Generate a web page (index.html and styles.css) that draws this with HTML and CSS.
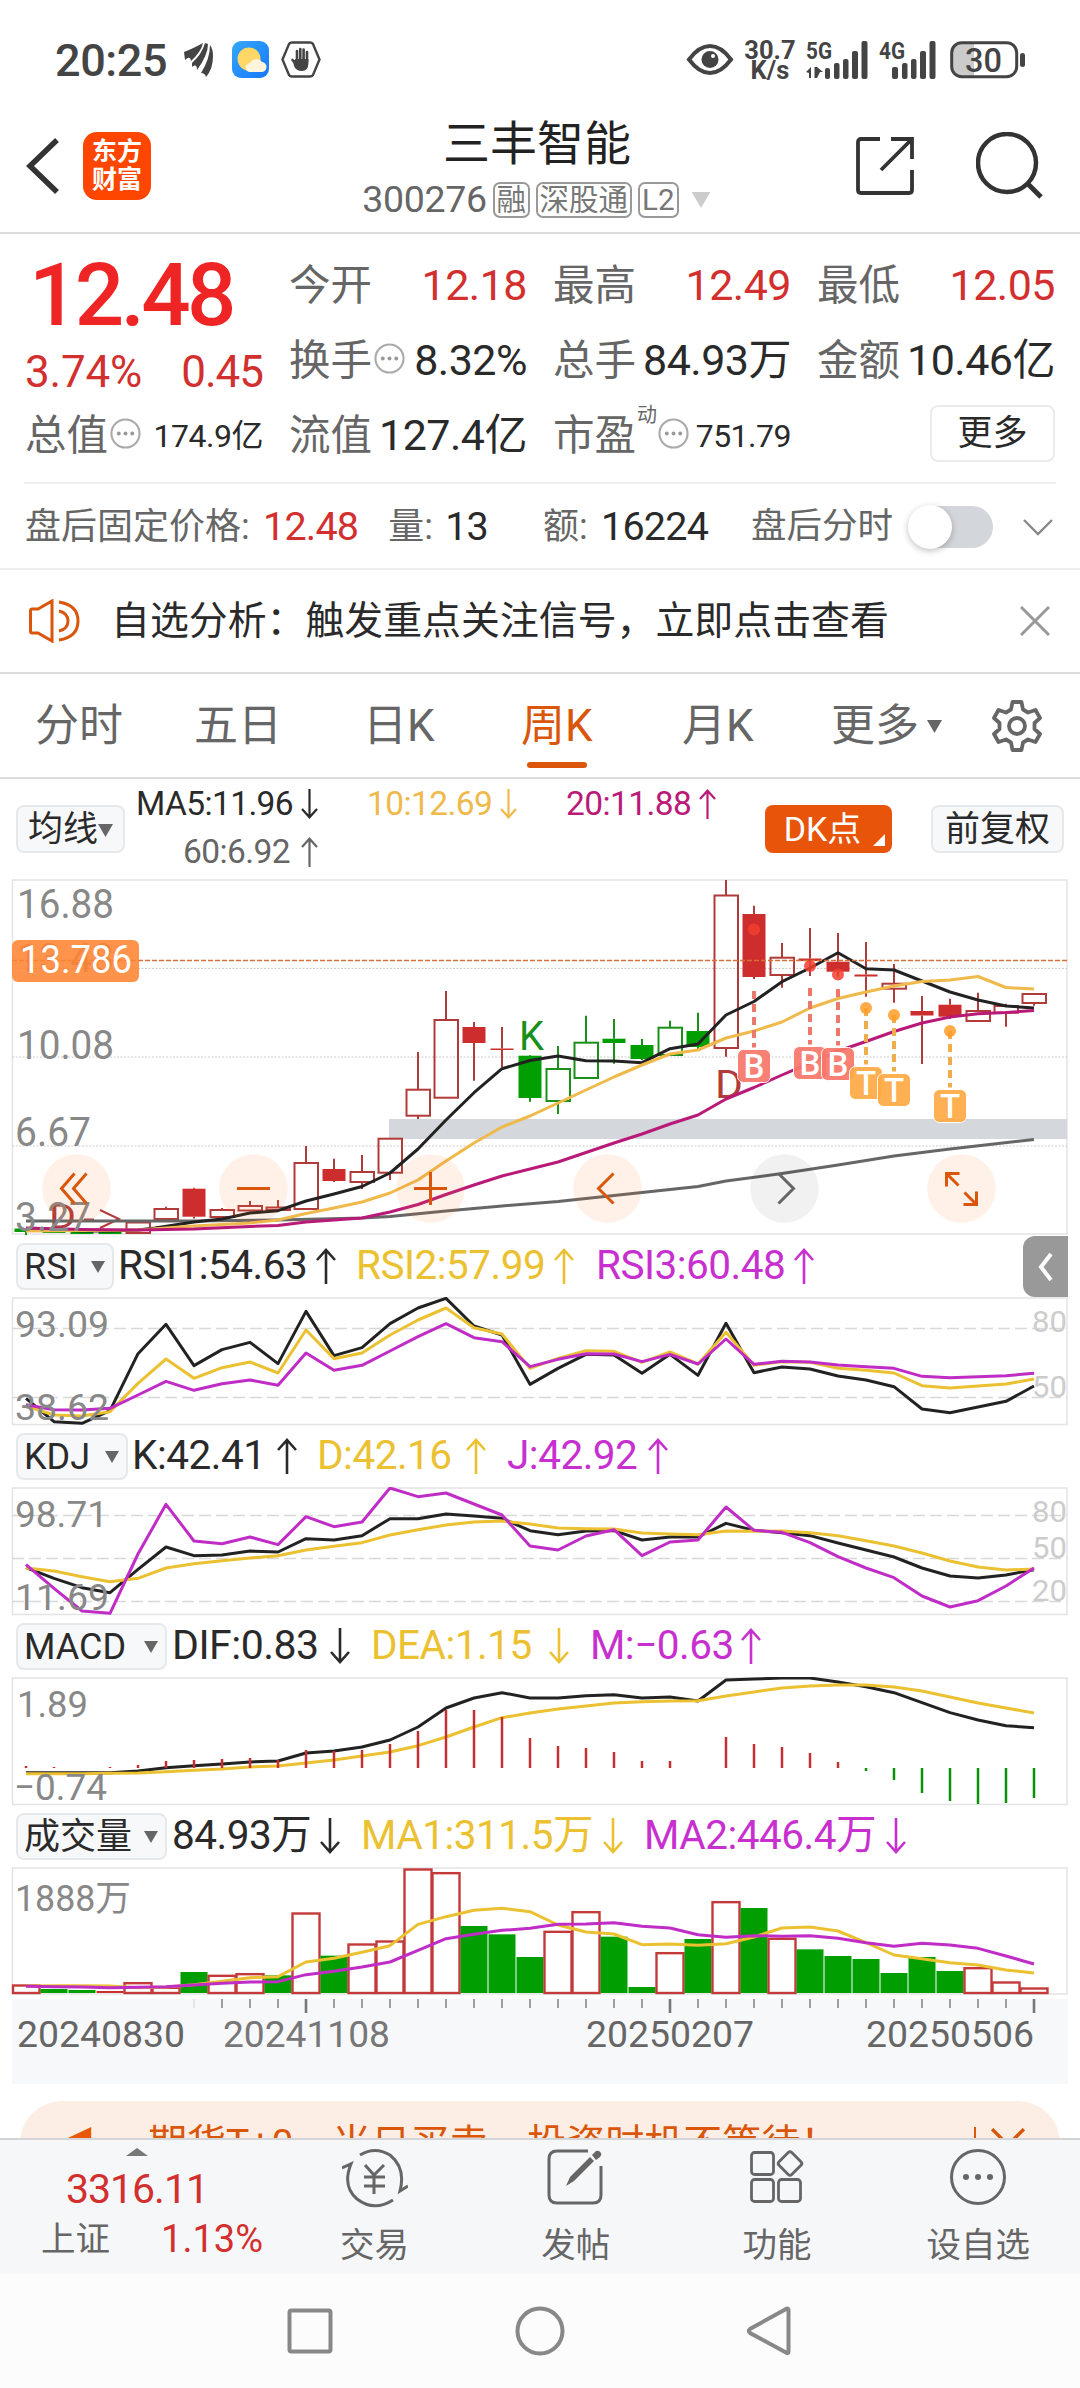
FILE: index.html
```html
<!DOCTYPE html>
<html lang="zh-CN">
<head>
<meta charset="utf-8">
<title>三丰智能 300276</title>
<link rel="stylesheet" href="styles.css">
</head>
<body>
<svg class="defs" aria-hidden="true">
  <symbol id="up" viewBox="0 0 20 36"><path d="M10 36V2M1 12L10 2L19 12" fill="none" stroke="currentColor" stroke-width="2.6"/></symbol>
  <symbol id="down" viewBox="0 0 20 36"><path d="M10 0V34M1 24L10 34L19 24" fill="none" stroke="currentColor" stroke-width="2.6"/></symbol>
  <symbol id="caret" viewBox="0 0 14 12"><path d="M0 0H14L7 12Z" fill="currentColor"/></symbol>
  <symbol id="info" viewBox="0 0 30 30"><circle cx="15" cy="15" r="13.6" fill="none" stroke="#aaa" stroke-width="2"/><g fill="#999"><circle cx="8.5" cy="15" r="1.9"/><circle cx="15" cy="15" r="1.9"/><circle cx="21.500" cy="15" r="1.900"/></g></symbol>
</svg>

<div class="status">
  <span class="clock">20:25</span>
  <svg class="s-feather" viewBox="0 0 30 34"><g fill="#444"><path d="M0 9Q8 6 19 0Q17 9 7 18Q6 12 1 17Z"/><path d="M8 20Q18 11 21 0L24 1Q24 12 13 27Q13 20 8 24Z"/><path d="M17 30Q26 16 26 2Q29 6 29 13Q29 26 22 34Q21 30 17 30Z"/></g></svg>
  <svg class="s-weather" viewBox="0 0 37 37"><defs><linearGradient id="sky" x2="1" y2="1"><stop stop-color="#35a8fb"/><stop offset="1" stop-color="#1677fb"/></linearGradient></defs><rect width="37" height="37" rx="9" fill="url(#sky)"/><circle cx="17" cy="18" r="11.500" fill="#fed766"/><path d="M18 31a4.500 4.500 0 0 1 0-9a7 7 0 0 1 12-1a5 5 0 0 1-1 10Z" fill="#fff4dc"/></svg>
  <svg class="s-hand" viewBox="0 0 40 37"><path d="M11 1.500H29Q31 1.500 32 3L38.500 18.500L32 34Q31 35.500 29 35.500H11Q9 35.500 8 34L1.500 18.500L8 3Q9 1.500 11 1.500Z" fill="none" stroke="#444" stroke-width="2.400"/><path d="M11.500 19L14 22M16 20V10M19.300 20V8M22.600 20V8.500M26 21V11" stroke="#444" stroke-width="2.600" stroke-linecap="round"/><path d="M12 20L14.700 18H27.400V23Q27 30 21 30Q15 30 13 25Z" fill="#444"/></svg>
  <span class="grow"></span>
  <svg class="s-eye" viewBox="0 0 46 31"><path d="M2 15.500Q12 2 23 2T44 15.500Q34 29 23 29T2 15.500Z" fill="none" stroke="#444" stroke-width="4"/><circle cx="23" cy="15.500" r="8.500" fill="#444"/><circle cx="26" cy="12" r="2" fill="#fff"/></svg>
  <span class="speed"><b>30.7</b><b>K/s</b></span>
  <svg class="s-sig1" viewBox="0 0 62 38"><text x="0" y="18" class="net" textLength="26" lengthAdjust="spacingAndGlyphs">5G</text><g fill="#444"><path d="M0 31L5 26V37H3V32ZM11 26H8.500V37H11ZM11 26L17 31H14L11 37Z"/><rect x="19" y="27" width="5" height="11" rx="2"/><rect x="28" y="22" width="5.500" height="16" rx="2"/><rect x="37" y="18" width="5.500" height="20" rx="2"/><rect x="46" y="10" width="6" height="28" rx="2"/><rect x="55.500" y="0" width="6" height="38" rx="2"/></g></svg>
  <svg class="s-sig2" viewBox="0 0 57 38"><text x="0" y="18" class="net" textLength="26" lengthAdjust="spacingAndGlyphs">4G</text><g fill="#444"><rect x="13" y="26" width="6" height="12" rx="2"/><rect x="23" y="22" width="5.500" height="16" rx="2"/><rect x="32" y="18" width="5.500" height="20" rx="2"/><rect x="41" y="10" width="6" height="28" rx="2"/><rect x="50.500" y="0" width="6" height="38" rx="2"/></g></svg>
  <svg class="s-batt" viewBox="0 0 76 38"><path d="M12 2H24V35H12Q2 34 2 24V12Q2 3 12 2Z" fill="#cbcbcb"/><rect x="1.700" y="1.700" width="65" height="34" rx="10" fill="none" stroke="#444" stroke-width="3"/><rect x="70" y="12" width="5" height="14" rx="2.500" fill="#444"/><text x="15" y="31" class="batt" textLength="37" lengthAdjust="spacingAndGlyphs">30</text></svg>
</div>

<div class="head">
  <svg class="back" viewBox="0 0 34 56"><path d="M31 2L4 28L31 54" fill="none" stroke="#333" stroke-width="5.500"/></svg>
  <div class="logo"><span>东方</span><span>财富</span></div>
  <div class="title">
    <div class="name">三丰智能</div>
    <div class="code"><span class="num">300276</span><i>融</i><i class="wide">深股通</i><i>L2</i><svg viewBox="0 0 14 12"><use href="#caret"/></svg></div>
  </div>
  <svg class="share" viewBox="0 0 58 58"><path d="M24 2H5Q2 2 2 5V53Q2 56 5 56H53Q56 56 56 53V33M35 2H56V22M55 3L25 33" fill="none" stroke="#333" stroke-width="3.800"/></svg>
  <svg class="search" viewBox="0 0 68 68"><circle cx="31" cy="31" r="29" fill="none" stroke="#333" stroke-width="4.500"/><path d="M51 51L65 65" stroke="#333" stroke-width="5"/></svg>
</div>

<div class="quote">
  <div class="last"><b>12.48</b><div><span>3.74%</span><span class="diff">0.45</span></div></div>
  <div class="q"><label>今开</label><em class="red">12.18</em></div>
  <div class="q"><label>最高</label><em class="red">12.49</em></div>
  <div class="q"><label>最低</label><em class="red">12.05</em></div>
  <div class="q"><label>换手</label><svg><use href="#info"/></svg><em>8.32%</em></div>
  <div class="q"><label>总手</label><em>84.93万</em></div>
  <div class="q"><label>金额</label><em>10.46亿</em></div>
  <div class="q"><label>总值</label><svg><use href="#info"/></svg><em class="sm">174.9亿</em></div>
  <div class="q"><label>流值</label><em>127.4亿</em></div>
  <div class="q"><label>市盈<sup>动</sup></label><svg class="after"><use href="#info"/></svg><em class="sm">751.79</em></div>
  <div class="q"><button class="more">更多</button></div>
</div>

<div class="post">
  <label class="p1">盘后固定价格:</label><em class="red">12.48</em>
  <label class="p2">量:</label><em>13</em>
  <label class="p3">额:</label><em>16224</em>
  <label class="p4">盘后分时</label>
  <span class="toggle"></span>
  <svg class="chev" viewBox="0 0 30 18"><path d="M1 2L15 16L29 2" fill="none" stroke="#888" stroke-width="2.400"/></svg>
</div>

<div class="banner">
  <svg class="horn" viewBox="0 0 52 44"><path d="M9 10H3Q1.500 10 1.500 12V32Q1.500 34 3 34H9L23 42V2ZM30 3Q49 6 49 22T30 41M30 12Q39 14 39 22T30 32" fill="none" stroke="#d9560b" stroke-width="3"/></svg>
  <span>自选分析：触发重点关注信号，立即点击查看</span>
  <svg class="close" viewBox="0 0 30 30"><path d="M1 1L29 29M29 1L1 29" stroke="#999" stroke-width="3"/></svg>
</div>

<div class="tabs">
  <span class="t1">分时</span><span class="t2">五日</span><span class="t3">日K</span><span class="t4 on">周K</span><span class="t5">月K</span><span class="t6">更多</span>
  <svg class="tc" viewBox="0 0 14 12"><use href="#caret"/></svg>
  <svg class="gear" viewBox="0 0 52 52"><path d="M21.500 2H30.500L32 9.500L37 12.500L44.500 10L49 18L43.500 23V29L49 34L44.500 42L37 39.500L32 42.500L30.500 50H21.500L20 42.500L15 39.500L7.500 42L3 34L8.500 29V23L3 18L7.500 10L15 12.500L20 9.500Z" fill="none" stroke="#666" stroke-width="3.800" stroke-linejoin="round"/><circle cx="26" cy="26" r="8" fill="none" stroke="#666" stroke-width="3.800"/></svg>
</div>

<div class="ctrl">
  <button class="ma">均线<svg viewBox="0 0 14 12"><use href="#caret"/></svg></button>
  <div class="mas">
    <span>MA5:11.96<svg><use href="#down"/></svg></span>
    <span class="y1">10:12.69<svg><use href="#down"/></svg></span>
    <span class="m1">20:11.88<svg><use href="#up"/></svg></span>
    <span class="g1">60:6.92<svg><use href="#up"/></svg></span>
  </div>
  <button class="dk">DK点</button>
  <button class="fq">前复权</button>
</div>

<svg class="chart" id="price" viewBox="0 879 1080 357" height="357"></svg>

<div class="ind rsi"><button>RSI<svg viewBox="0 0 14 12"><use href="#caret"/></svg></button>
  <span>RSI1:54.63<svg><use href="#up"/></svg></span><span class="y">RSI2:57.99<svg><use href="#up"/></svg></span><span class="m">RSI3:60.48<svg><use href="#up"/></svg></span>
  <div class="side"><svg viewBox="0 0 14 28"><path d="M12 1L2 14L12 27" fill="none" stroke="#fff" stroke-width="4"/></svg></div>
</div>
<svg class="chart" id="rsi" viewBox="0 1297 1080 129" height="129"></svg>

<div class="ind kdj"><button>KDJ<svg viewBox="0 0 14 12"><use href="#caret"/></svg></button>
  <span>K:42.41<svg><use href="#up"/></svg></span><span class="y">D:42.16<svg><use href="#up"/></svg></span><span class="m">J:42.92<svg><use href="#up"/></svg></span></div>
<svg class="chart" id="kdj" viewBox="0 1487 1080 129" height="129"></svg>

<div class="ind macd"><button>MACD<svg viewBox="0 0 14 12"><use href="#caret"/></svg></button>
  <span>DIF:0.83<svg><use href="#down"/></svg></span><span class="y">DEA:1.15<svg><use href="#down"/></svg></span><span class="m">M:−0.63<svg><use href="#up"/></svg></span></div>
<svg class="chart" id="macd" viewBox="0 1677 1080 129" height="129"></svg>

<div class="ind vol"><button>成交量<svg viewBox="0 0 14 12"><use href="#caret"/></svg></button>
  <span>84.93万<svg><use href="#down"/></svg></span><span class="y">MA1:311.5万<svg><use href="#down"/></svg></span><span class="m">MA2:446.4万<svg><use href="#down"/></svg></span></div>
<svg class="chart" id="vol" viewBox="0 1867 1080 217" height="217"></svg>

<div class="promo"><div>
  <svg class="p-horn" viewBox="0 0 40 40"><path d="M0 17L36 0V40L0 26Z" fill="#e8590c"/></svg>
  <span>期货T+0，当日买卖，投资时机不等待！</span><u></u>
  <svg class="p-x" viewBox="0 0 30 30"><path d="M1 1L29 29M29 1L1 29" stroke="#d9560b" stroke-width="3"/></svg>
</div></div>

<div class="bar">
  <div class="index"><svg viewBox="0 0 22 8"><path d="M0 8L11 0L22 8Z" fill="#777"/></svg><b>3316.11</b><p><label>上证</label><em>1.13%</em></p></div>
  <div class="b"><svg viewBox="0 0 66 60"><g fill="none" stroke="#666" stroke-width="3"><path d="M18 7Q33 -2 48 7Q64 20 58 43L66 38M0 20L9 16Q0 38 15 51Q32 64 51 52"/><path d="M23 17L32 27L42 17M32 27V46M22 29H43M22 38H43"/></g></svg>交易</div>
  <div class="b"><svg viewBox="0 0 66 60"><path d="M45 3H14Q6 3 6 11V47Q6 55 14 55H50Q58 55 58 47V18" fill="none" stroke="#666" stroke-width="3"/><path d="M23 38L27 29L47 9L51 13L31 33ZM49 7L53 3Q56 2 58 5Q59 7 57 9L53 12Z" fill="#666"/></svg>发帖</div>
  <div class="b"><svg viewBox="0 0 66 60"><g fill="none" stroke="#666" stroke-width="2.800"><rect x="7.500" y="4.500" width="22" height="22" rx="3"/><rect x="7.500" y="31.500" width="22" height="22" rx="3"/><rect x="34.500" y="31.500" width="22" height="22" rx="3"/><rect x="37" y="6.500" width="18" height="18" rx="2.500" transform="rotate(45 46 15.500)"/></g></svg>功能</div>
  <div class="b"><svg viewBox="0 0 66 60"><circle cx="33" cy="29" r="26.500" fill="none" stroke="#666" stroke-width="3"/><g fill="#666"><circle cx="21" cy="29" r="3"/><circle cx="33" cy="29" r="3"/><circle cx="45" cy="29" r="3"/></g></svg>设自选</div>
</div>

<div class="nav">
  <svg viewBox="0 0 50 50"><rect x="4.500" y="4.500" width="41" height="41" rx="2" fill="none" stroke="#888" stroke-width="4"/></svg>
  <svg viewBox="0 0 50 50"><circle cx="25" cy="25" r="22.500" fill="none" stroke="#888" stroke-width="4"/></svg>
  <svg viewBox="0 0 50 50"><path d="M43.500 4V46Q43.500 48 41 46.500L5 27Q2.500 25 5 23L41 3Q43.500 1.500 43.500 4Z" fill="none" stroke="#888" stroke-width="4"/></svg>
</div>
<script src="charts.js"></script>
</body>
</html>
```
FILE: styles.css
```css
* { box-sizing: border-box; }
body {
  margin: 0; width: 1080px; height: 2388px; overflow: hidden; background: #fff; color: #2a2a2a;
  font-family: Roboto, "Noto Sans CJK SC", sans-serif; line-height: 1;
  display: flex; flex-direction: column;
}
body > * { flex: none; }
.defs { position: absolute; width: 0; height: 0; }
em, i { font-style: normal; }
button { font: inherit; color: inherit; padding: 0; background: #f7f8fa; border: 2px solid #e6e8ea; border-radius: 8px; white-space: nowrap; }
.red { color: #d22f2f !important; }
.grow { flex: 1; }

.status { height: 119px; display: flex; align-items: center; padding: 0 54px 0 55px; color: #444; }
.status svg { overflow: visible; }
.clock { font-size: 45px; font-weight: 500; width: 129px; letter-spacing: -.4px; padding-top: 2px; }
.s-feather { width: 30px; height: 34px; }
.s-weather { width: 37px; height: 37px; margin-left: 18px; }
.s-hand { width: 40px; height: 37px; margin-left: 12px; }
.s-eye { width: 46px; height: 31px; }
.speed { width: 50px; margin: 0 11px 0 12px; display: flex; flex-direction: column; align-items: center; font-size: 25.500px; line-height: 20px; }
.speed b { font-weight: 700; }
.net { font: 700 24px Roboto, sans-serif; fill: #444; }
.batt { font: 500 34px Roboto, sans-serif; fill: #444; }
.s-sig1 { width: 62px; height: 38px; }
.s-sig2 { width: 57px; height: 38px; margin-left: 11px; }
.s-batt { width: 76px; height: 38px; margin-left: 14px; }

.head { height: 115px; border-bottom: 2px solid #dcdcdc; display: flex; align-items: flex-start; padding-left: 26px; color: #222; }
.back { width: 34px; height: 56px; margin-top: 19px; }
.logo { width: 68px; height: 68px; margin: 13px 0 0 23px; background: #ff4600; border-radius: 14px; color: #fff; font-size: 25px; font-weight: 700; line-height: 28px; display: flex; flex-direction: column; align-items: center; justify-content: center; }
.title { width: 638px; margin-left: 67px; display: flex; flex-direction: column; align-items: center; }
.name { font-size: 47px; margin-top: 1px; }
.code { display: flex; align-items: center; font-size: 37.5px; color: #666; margin-top: 14px; gap: 6px; }
.code .num { letter-spacing: -.3px; }
.code i { font-size: 29.5px; height: 36px; line-height: 32px; width: 37px; text-align: center; border: 2px solid #999; border-radius: 7px; color: #777; }
.code i:nth-of-type(3) { width: 41px; }
.code .wide { width: 96px; }
.code svg { width: 22px; height: 16px; margin-left: 5px; color: #ccc; }
.share { width: 58px; height: 58px; margin-top: 18px; }
.search { width: 68px; height: 68px; margin: 13px 0 0 62px; }

.quote { height: 250px; margin: 0 24px; padding: 14px 0 0 1px; border-bottom: 2px solid #eee; display: grid; grid-template-columns: 238px 238px 238px 238px; grid-template-rows: 75px 75px 75px; column-gap: 26px; }
.last { grid-row: span 2; color: #d22f2f; }
.last b { display: block; font-size: 87px; font-weight: 500; color: #ee2524; letter-spacing: -3.6px; margin: 4px 0 0 4px; }
.last div { display: flex; justify-content: space-between; font-size: 44px; margin-top: 11px; letter-spacing: -.2px; }
.diff { letter-spacing: -1px; }
.q { display: flex; align-items: center; font-size: 41.500px; }
.q label { color: #666; position: relative; }
.q em { margin-left: auto; color: #2a2a2a; font-size: 43px; letter-spacing: -.5px; white-space: nowrap; }
.q em.sm { font-size: 32px; letter-spacing: -.5px; }
.q svg { width: 31px; height: 31px; margin: -4px 0 0 2px; }
.q svg.after { margin-left: 22px; }
.q sup { position: absolute; left: 84px; top: -10px; font-size: 20px; line-height: 1; }
.more { margin-left: auto; width: 125px; height: 57px; margin-top: -4px; background: #fff; font-size: 35px; border-color: #ebebeb; }

.post { height: 86px; border-bottom: 2px solid #eee; display: flex; align-items: center; padding: 2px 0 0 25px; font-size: 36px; color: #666; white-space: nowrap; }
.post em { font-size: 39.500px; color: #2a2a2a; letter-spacing: -.8px; }
.p1 { width: 238px; } .p2 { width: 57px; margin-left: 30px; } .p3 { width: 58px; margin-left: 55px; } .p4 { margin-left: 43px; font-size: 35.500px; }
.toggle { width: 78px; height: 42px; border-radius: 21px; background: #d3d6db; margin-left: auto; position: relative; }
.toggle::before { content: ""; position: absolute; left: -7px; top: -1px; width: 44px; height: 44px; border-radius: 50%; background: #fff; box-shadow: 0 2px 6px rgba(0,0,0,.25); }
.chev { width: 30px; height: 18px; margin: 0 27px 0 30px; }

.banner { height: 104px; border-bottom: 2px solid #dcdcdc; display: flex; align-items: center; padding: 0 30px 0 29px; font-size: 38.900px; }
.horn { width: 52px; height: 44px; }
.banner span { margin: 0 auto 0 30px; white-space: nowrap; }
.close { width: 30px; height: 30px; }

.tabs { height: 105px; border-bottom: 2px solid #dcdcdc; display: grid; grid-template-columns: 159px 169px 158px 161px 149px 96px 64px 52px; align-items: center; padding: 1px 0 0 35px; font-size: 44px; color: #666; }
.on { color: #d9560b; position: relative; }
.on::after { content: ""; position: absolute; left: 6px; bottom: -20px; width: 60px; height: 6px; border-radius: 3px; background: #d9560b; }
.tc { width: 15px; height: 13px; }
.gear { width: 52px; height: 52px; }

.ctrl { height: 100px; display: flex; align-items: flex-start; padding-left: 16px; }
.ctrl button { height: 48px; margin-top: 26px; font-size: 35px; }
.ma { width: 109px; }
.ma svg { width: 15px; height: 13px; color: #666; margin-bottom: 4px; }
.mas { width: 580px; margin: 1px 49px 0 11px; display: grid; grid-template-columns: 182px 150px 150px; grid-template-rows: 48px 48px; column-gap: 49px; font-size: 33.500px; align-items: center; letter-spacing: -.6px; }
.mas span, .ind span { display: flex; align-items: center; justify-content: space-between; white-space: nowrap; }
.mas svg { width: 17px; height: 30px; }
.mas span:nth-child(4) { padding-left: 47px; }
.y1 { color: #f0b94b; } .m1 { color: #b91a78; } .g1 { color: #666; }
.ctrl .dk { width: 127px; background: #e85409; border: 0; color: #fff; padding-right: 12px; position: relative; font-size: 34px; }
.dk::after { content: ""; position: absolute; right: 7px; bottom: 7px; border-left: 12px solid transparent; border-bottom: 12px solid #fff; }
.ctrl .fq { width: 133px; margin-left: 39px; }

.chart { width: 1080px; display: block; }
.chart text { font-family: Roboto, "Noto Sans CJK SC", sans-serif; }
.ind { height: 61px; display: grid; align-items: center; padding-left: 16px; font-size: 40.500px; position: relative; letter-spacing: -.5px; }
.ind button { height: 47px; display: flex; align-items: center; justify-content: space-between; padding: 0 7px 0 6px; font-size: 36px; }
.ind button svg { width: 14px; height: 12px; color: #666; }
.ind > span { padding-bottom: 2px; }
.ind span svg { width: 20px; height: 36px; }
.ind .y { color: #ebc132; } .ind .m { color: #c730cf; }
.rsi { grid-template-columns: 98px 217px 220px 220px; column-gap: 4px; }
.rsi span { width: 218px; }
.rsi .y { margin-left: 17px; } .rsi .m { margin-left: 33px; }
.kdj { grid-template-columns: 112px 165px 170px 161px; column-gap: 20px; }
.kdj span:nth-child(2) { margin-left: -16px; width: 165px; }
.kdj .y { margin-left: -16px; width: 169px; } .kdj .m { margin-left: -16px; width: 161px; }
.kdj span svg { margin-right: 0; }
.macd { grid-template-columns: 151px 178px 198px 171px; column-gap: 21px; }
.macd span { margin-left: -16px; width: 100%; }
.macd span:nth-child(2) { font-size: 41px; }
.vol { grid-template-columns: 151px 168px 262px 262px; column-gap: 21px; }
.vol span { margin-left: -16px; width: 100%; }
.side { position: absolute; left: 1023px; top: 0; width: 45px; height: 61px; background: #999; border-radius: 12px 0 0 12px; display: flex; align-items: center; justify-content: center; }
.side svg { width: 16px; height: 28px; }

.promo { height: 54px; padding: 17px 20px 0; overflow: hidden; }
.promo div { height: 90px; border-radius: 42px; background: #fceee4; display: flex; align-items: flex-start; padding: 24px 35px 0 37px; font-size: 39px; color: #d9560b; }
.p-horn { width: 38px; height: 42px; }
.promo span { margin-left: 53px; white-space: nowrap; }
.promo u { width: 2px; height: 36px; background: #d9560b; margin: 2px 15px 0 auto; }
.p-x { width: 34px; height: 34px; margin-top: 3px; }

.bar { height: 136px; background: #f6f7f9; border-top: 2px solid #d3d5d8; display: flex; font-size: 34.500px; color: #666; }
.index { width: 274px; display: flex; flex-direction: column; align-items: center; }
.index svg { width: 22px; height: 8px; margin-top: 8px; }
.index b { font-weight: 400; font-size: 41px; color: #d22f2f; margin-top: 13px; letter-spacing: -1px; }
.index p { margin: 10px 0 0 30px; width: 222px; display: flex; justify-content: space-between; align-items: center; }
.index em { color: #d22f2f; font-size: 38px; }
.b { width: 201.200px; display: flex; flex-direction: column; align-items: center; gap: 20px; padding-top: 8px; }
.b svg { width: 66px; height: 60px; }
.nav { height: 114px; background: #fcfcfc; display: flex; justify-content: center; align-items: center; gap: 180px; }
.nav svg { width: 50px; height: 50px; }
```
FILE: charts.js
```js
const COUNT = 37, X0 = 26, STEP = 28;
const RED = '#b13a3a', RFILL = '#ce2d2d', GREEN = '#1a901a', GFILL = '#009e00';
const px = i => X0 + STEP * i;

const rect = (x, y, w, h, a) => `<rect x="${x}" y="${y}" width="${w}" height="${h}" ${a}/>`;
const line = (x1, y1, x2, y2, c, w = 2, a = '') => `<path d="M${x1} ${y1}L${x2} ${y2}" stroke="${c}" stroke-width="${w}" ${a}/>`;
const label = (s, x, y, w, size, c = '#888', a = '') => `<text x="${x}" y="${y}" font-size="${size}" fill="${c}" textLength="${w}" lengthAdjust="spacingAndGlyphs" ${a}>${s}</text>`;
const poly = (pts, c, w) => `<polyline points="${pts.map(p => p.join()).join(' ')}" fill="none" stroke="${c}" stroke-width="${w}" stroke-linejoin="round"/>`;
const series = (v, base, c, w = 3) => poly(v.map((y, i) => [px(i), base + y / 3]), c, w);
const frame = (y, h) => rect(12.5, y, 1054.500, h, 'fill="none" stroke="#e3e3e3" stroke-width="1.500"');
const draw = (id, s) => { document.getElementById(id).innerHTML = s; };

/* [index, kind, body top, body bottom, wick top, wick bottom]; r/g hollow, R/G filled */
const candles = [
  [0,'G',1228.5,1232,1228,1235],[1,'G',1231.5,1233,1231,1233],[2,'G',1232,1234,1232,1234],[3,'G',1232,1234,1232,1234],
  [4,'r',1222.5,1233,1222,1233],[5,'r',1209,1219,1206.7,1220.5],[6,'R',1188.7,1216.7,1187.7,1218.5],[7,'r',1210,1217,1208,1217],
  [8,'r',1206,1210.5,1201,1211],[9,'r',1207.5,1210,1200,1210],[10,'r',1163,1209,1146,1209],[11,'R',1169,1181,1158.7,1182],
  [12,'r',1172,1182,1155,1189],[13,'r',1138.7,1172.7,1138,1180],[14,'r',1089.7,1115.7,1052,1119],[15,'r',1020,1097.7,991,1098],
  [16,'R',1027,1043,1022,1080.7],[17,'R',1048.5,1050,1027,1067],[18,'G',1055.7,1098,1055,1101.7],[19,'g',1069,1101,1046,1114],
  [20,'g',1042.7,1078,1015.7,1078],[21,'G',1038.7,1043,1019,1063.7],[22,'G',1045,1059,1039,1060],[23,'g',1027.7,1055,1020.7,1055],
  [24,'G',1031,1047,1012.7,1051],[25,'r',895.5,1048,880,1056.7],[26,'R',914,977,905.7,979],[27,'r',957.7,975,943,987.7],
  [28,'R',958.5,961,928,976],[29,'R',961.7,971.7,933,976.7],[30,'R',974.5,976.5,942,996.7],[31,'r',983.7,988.7,964,1002.7],
  [32,'R',1011,1015.5,996,1064],[33,'R',1004.7,1016.7,998.7,1019],[34,'r',1011,1021,992.7,1022],[35,'r',1006,1012.7,1003.7,1026.7],
  [36,'r',994,1003,994,1005.7]
];
const candle = ([i, k, t, b, wt, wb]) => {
  const x = px(i), up = k.toLowerCase() === 'r', c = up ? RED : GREEN;
  let s = '';
  if (wt < t) s += line(x, wt, x, t, c);
  if (wb > b) s += line(x, b, x, wb, c);
  return s + (k === 'r' || k === 'g'
    ? rect(x - 11.5, t, 23.5, b - t, `fill="none" stroke="${c}" stroke-width="2"`)
    : rect(x - 11.5, t, 23, b - t, `fill="${up ? RFILL : GFILL}"`));
};

const ma5 = [[26,1229],[54,1230],[82,1231],[110,1231],[138,1230],[155,1228],[194,1222],[222,1219],[250,1213],[278,1210.7],[306,1201],[334,1194],[362,1186.5],[390,1173],[418,1149],[446,1120],[474,1092.7],[502,1068.7],[530,1060.5],[558,1056],[586,1060.7],[614,1061],[642,1062.7],[670,1048.7],[698,1044],[726,1015],[754,1001.5],[782,981.7],[810,968],[838,952.7],[866,968.7],[894,970],[922,981],[950,992],[978,1000],[1006,1006],[1034,1008]];
const ma10 = [[26,1231],[138,1230],[194,1226],[250,1223],[278,1220],[306,1213.5],[334,1208],[362,1202],[390,1193],[418,1180],[446,1161],[474,1143],[502,1127],[530,1116],[558,1103],[586,1090],[614,1077],[642,1065],[670,1054],[698,1050],[726,1038],[754,1031],[782,1022],[810,1008],[838,998.5],[866,992],[894,986],[922,981.5],[950,980],[978,976.5],[1006,987.5],[1034,989]];
const ma20 = [[26,1228],[82,1229.5],[138,1230],[194,1229],[250,1226.5],[278,1225.5],[306,1222],[362,1218],[390,1212],[418,1204.5],[446,1194.5],[474,1185],[502,1176],[530,1169],[558,1162],[614,1143],[642,1134],[670,1124],[698,1115],[726,1099],[754,1087.5],[782,1075],[810,1063],[838,1051],[866,1041.5],[894,1031.5],[922,1023],[950,1017],[978,1013.7],[1006,1012.5],[1034,1010.5]];
const ma60 = [[26,1221],[194,1221],[278,1220],[362,1218],[390,1216.5],[446,1211],[502,1206],[558,1201.5],[642,1192.5],[698,1186.5],[726,1181],[782,1173.5],[838,1165],[894,1156],[950,1149],[1034,1139.5]];

const marker = (x, dot, from, top, kind) => {
  const c = kind === 'B' ? '#f8776b' : '#ffab45';
  return line(x, from, x, top - 2, kind === 'B' ? '#ec7a6c' : '#f0ad4e', 4, 'stroke-dasharray="8 5"')
    + `<circle cx="${x}" cy="${dot}" r="6" fill="${kind === 'B' ? '#f23f2e' : '#ff9c27'}" opacity=".85"/>`
    + rect(x - 16.5, top, 33, 33, `rx="6" fill="${c}" stroke="#fff" stroke-width="1" opacity=".93"`)
    + `<text x="${x}" y="${top + 28}" text-anchor="middle" font-size="33" font-weight="500" fill="#fff">${kind}</text>`;
};

let p = frame(880, 354);
for (const y of [968.5, 1057, 1146]) p += line(12, y, 1067, y, '#ccc', 1, 'stroke-dasharray="2 1.5"');
p += rect(389, 1119, 678, 20, 'fill="#d4d7dc"');
p += label('D', 49, 1228, 27, 34, RED) + line(84, 1219.5, 94, 1219.5, RED) + `<path d="M100 1210L119 1219L100 1228" fill="none" stroke="${RED}" stroke-width="2"/>`;
p += label('K', 519, 1050, 25, 40, GREEN) + label('D', 715, 1098, 28, 39, RED);
p += candles.map(candle).join('');
p += poly(ma60, '#666', 3) + poly(ma5, '#222', 3) + poly(ma10, '#f0b94b', 3) + poly(ma20, '#b91a78', 3);
p += label('16.88', 17, 918, 97, 40) + label('13.48', 17, 972, 97, 40) + label('10.08', 17, 1058.5, 97, 40) + label('6.67', 15, 1145.5, 76, 40) + label('3.27', 15, 1231, 76, 40);
p += line(12, 960.5, 1067, 960.5, '#d8703a', 1.4, 'stroke-dasharray="5 2"');
p += rect(12, 940, 127, 42, 'rx="6" fill="#ff8433" opacity=".88"') + label('13.786', 20, 973, 112, 39, '#fff');
p += marker(754, 929.5, 991, 1049.5, 'B') + marker(810, 966, 988, 1046.5, 'B') + marker(838, 974.5, 989, 1047.5, 'B');
p += marker(866, 1008, 1008, 1066.5, 'T') + marker(894, 1015, 1015, 1073.5, 'T') + marker(950, 1031, 1031, 1089.5, 'T');
const tools = [
  [76.5, 'M-2 -15L-15 0L-2 15M10 -15L-3 0L10 15'], [253.5, 'M-16.500 0H16.500'], [430.5, 'M-16.500 0H16.500M0 -16.500V16.500'],
  [607.5, 'M6 -15L-9 0L6 15'], [784.5, 'M-6 -15L9 0L-6 15'], [961.5, 'M-15 -2V-15H-2M-15 -15L-3 -3M15 3V16H2M15 16L3 4']
];
tools.forEach(([x, d], i) => {
  const gray = i === 4;
  p += `<g transform="translate(${x} 1188.500)"><circle r="34.300" fill="${gray ? '#000' : '#ff6a20'}" opacity="${gray ? .055 : .1}"/><path d="${d}" fill="none" stroke="${gray ? '#666' : '#d9560b'}" stroke-width="3"/></g>`;
});
draw('price', p);

const dashed = y => line(12, y, 1067, y, '#d8d8d8', 1.5, 'stroke-dasharray="12 5"');
const BLACK = '#222', YEL = '#ebc132', MAG = '#c02cc6';

draw('rsi', frame(1298, 126.5) + dashed(1328.5) + dashed(1397.5)
  + label(80, 1032, 1332, 35, 30, '#ccc') + label(50, 1032, 1397, 35, 30, '#ccc')
  + series([505,575,580,542,371,283,407,359,337,401,244,377,353,281,234,205,288,315,463,415,373,375,430,373,436,280,428,411,417,438,450,470,537,548,531,514,468], 1230, BLACK)
  + series([528,555,558,545,460,387,445,413,396,429,300,386,369,315,270,234,293,312,415,385,362,364,397,366,402,307,406,395,397,415,421,429,467,474,468,462,447], 1230, YEL)
  + series([524,539,540,535,495,454,481,461,450,466,369,421,406,363,320,281,323,335,410,388,371,372,395,373,402,327,403,394,396,405,410,415,439,443,440,437,430], 1230, MAG)
  + label('93.09', 15, 1337, 94, 37) + label('38.62', 15, 1420, 94, 37));

draw('kdj', frame(1488, 126.5) + dashed(1515.5) + dashed(1558.5) + dashed(1601.5)
  + label(80, 1032, 1522, 35, 30, '#ccc') + label(50, 1032, 1558, 35, 30, '#ccc') + label(20, 1032, 1601, 35, 30, '#ccc')
  + series([1013,1045,1073,1088,1018,951,977,975,963,966,926,930,917,866,866,852,858,865,902,914,903,902,930,921,921,880,901,908,917,939,960,981,1014,1038,1044,1035,1019], 1230, BLACK)
  + series([1014,1023,1040,1055,1045,1014,1001,992,984,977,960,949,938,915,899,885,876,873,882,894,896,897,909,912,914,903,904,903,908,917,932,948,969,993,1011,1020,1017], 1230, YEL)
  + series([1004,1075,1143,1150,972,823,933,941,921,944,860,890,876,774,800,789,822,855,948,960,918,899,977,936,930,831,901,907,938,980,1014,1043,1098,1131,1112,1068,1014], 1230, MAG)
  + label('98.71', 15, 1527, 93, 37) + label('11.69', 15, 1610, 94, 37));

const hist = [468,471,474,471,465,453,450,447,444,450,420,423,420,402,363,300,300,321,384,408,414,426,453,453,474,381,402,411,429,456,483,510,549,573,582,579,564];
draw('macd', frame(1678, 126.5)
  + series([488,488,488,488,483,473,467,462,456,453,429,423,411,390,351,294,264,248,264,264,257,254,264,261,273,210,207,204,204,216,230,248,278,308,330,347,353], 1610, BLACK)
  + series([491,491,491,490,489,485,481,477,471,468,459,450,438,426,407,381,351,323,309,297,288,279,275,273,272,258,246,234,228,225,225,231,243,261,279,294,309], 1610, YEL)
  + hist.map((y, i) => line(px(i), 1768, px(i), 1610 + y / 3, i < 30 ? '#c43030' : '#0a920a', 2.5)).join('')
  + label('1.89', 17, 1717, 71, 37) + label('−0.74', 14, 1800, 93, 37));

const vols = [525,537,540,543,518,532,486,496,491,496,309,437,402,393,177,188,348,373,441,364,305,380,531,428,387,275,294,385,418,438,447,489,441,483,473,516,534];
const volKinds = 'rggRrrGrrGrGrrrrGGGrrGGrGrGrGGGGGGrrr';
let v = frame(1868, 126);
vols.forEach((y, i) => {
  const k = volKinds[i], top = 1810 + y / 3, left = i ? px(i) - 13.5 : 13;
  v += k === 'r' ? rect(left, top + .5, px(i) + 13.5 - left, 1992.5 - top, 'fill="#fff" stroke="#c43a3a" stroke-width="2.400"')
    : rect(left, top, 27, 1993 - top, `fill="${k === 'R' ? RFILL : GFILL}"`);
});
v += series([528,527,527,528,533,531,524,514,503,500,456,445,427,407,343,320,301,295,305,345,366,372,404,402,406,401,381,354,351,363,398,435,446,458,465,480,489], 1810, YEL)
  + series([529,530,531,533,532,530,525,520,516,515,494,484,471,456,421,386,373,361,355,343,342,338,349,354,374,382,377,379,377,385,398,409,400,405,415,438,462], 1810, MAG)
  + label('1888万', 15, 1911, 116, 36) + rect(12, 1999, 1056, 85, 'fill="#f7f8fa"');
for (let i = 6; i < COUNT; i++) {
  const major = (i - 10) % 13 === 0;
  v += line(px(i), 1999, px(i), major ? 2013 : 2008, i === 6 ? '#ddd' : '#777', major ? 2.6 : 1.4);
}
v += label('20240830', 17, 2047, 168, 37.5, '#666') + label('20241108', 223, 2047, 167, 37.5, '#777') + label('20250207', 586, 2047, 168, 37.5, '#666') + label('20250506', 866, 2047, 168, 37.5, '#666');
draw('vol', v);
```
